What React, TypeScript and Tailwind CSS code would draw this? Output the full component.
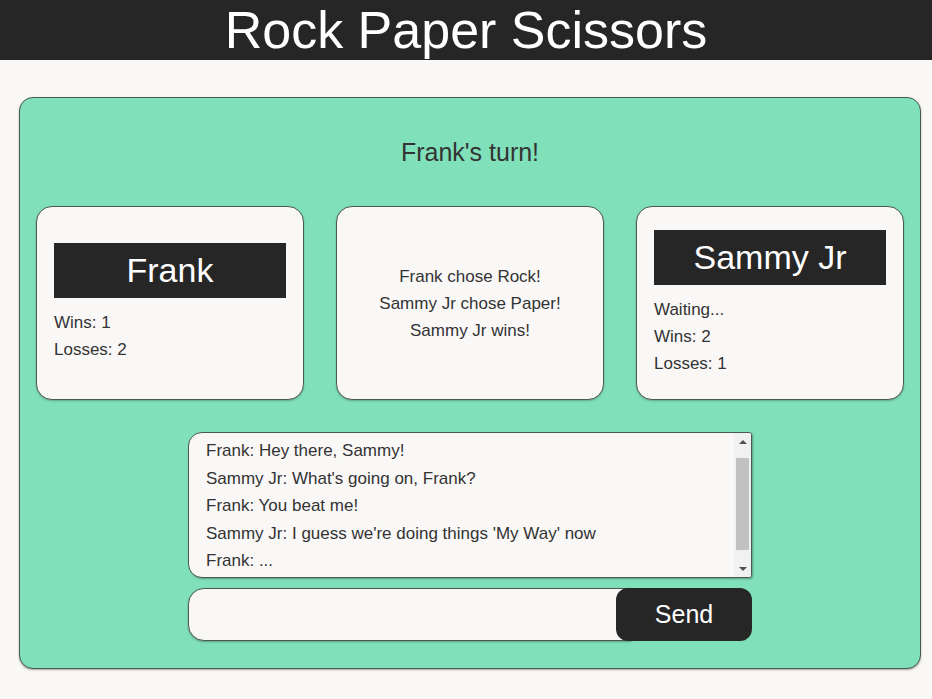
export default function App() {
  const font = { fontFamily: '"Liberation Sans", Arial, sans-serif' };
  const messages = [
    "Frank: Hey there, Sammy!",
    "Sammy Jr: What's going on, Frank?",
    "Frank: You beat me!",
    "Sammy Jr: I guess we're doing things 'My Way' now",
    "Frank: ...",
  ];

  return (
    <div className="min-h-[699px] bg-[#faf8f7] pb-[30px] text-[#333]" style={font}>
      <header className="h-[60px] bg-[#262626] text-center text-[52px] leading-[60px] text-white">
        Rock Paper Scissors
      </header>

      <main className="ml-[19px] mt-[37px] w-[902px] rounded-[14px] border border-[#4a5a52] bg-[#80e0ba] px-4 pb-[27px] pt-[39px] shadow-[0_1px_2px_rgba(0,0,0,0.35)]">
        <h2 className="text-center text-[25px] leading-[30px]">Frank's turn!</h2>

        <div className="mt-[39px] flex gap-8">
          <div className="flex h-[194px] w-[268px] flex-col justify-center rounded-[16px] border border-[#4a5a52] bg-[#faf8f7] px-[17px] text-[17px] leading-[27px] shadow-[0_1px_2px_rgba(0,0,0,0.25)]">
            <div className="mb-[11px] h-[55px] bg-[#262626] text-center text-[34px] leading-[55px] text-white">
              Frank
            </div>
            <div>Wins: 1</div>
            <div>Losses: 2</div>
          </div>

          <div className="flex h-[194px] w-[268px] flex-col justify-center rounded-[16px] border border-[#4a5a52] bg-[#faf8f7] text-center text-[17px] leading-[27px] shadow-[0_1px_2px_rgba(0,0,0,0.25)]">
            <div>Frank chose Rock!</div>
            <div>Sammy Jr chose Paper!</div>
            <div>Sammy Jr wins!</div>
          </div>

          <div className="flex h-[194px] w-[268px] flex-col justify-center rounded-[16px] border border-[#4a5a52] bg-[#faf8f7] px-[17px] text-[17px] leading-[27px] shadow-[0_1px_2px_rgba(0,0,0,0.25)]">
            <div className="mb-[11px] h-[55px] bg-[#262626] text-center text-[34px] leading-[55px] text-white">
              Sammy Jr
            </div>
            <div>Waiting...</div>
            <div>Wins: 2</div>
            <div>Losses: 1</div>
          </div>
        </div>

        <div className="mx-auto mt-8 w-[564px]">
          <div className="flex h-[146px] overflow-hidden rounded-l-[14px] rounded-r-[3px] border border-[#4a5a52] bg-[#faf8f7] shadow-[1px_1px_2px_rgba(0,0,0,0.3)]">
            <div className="flex-1 overflow-hidden pl-[17px] pt-1 text-[17px] leading-[27.5px]">
              {messages.map((m) => (
                <div key={m} className="whitespace-nowrap">
                  {m}
                </div>
              ))}
            </div>
            <div className="flex w-[17px] flex-col bg-[#f1f1f1]">
              <div className="flex h-[17px] items-center justify-center">
                <div className="h-0 w-0 border-x-[4px] border-b-[4px] border-x-transparent border-b-[#505050]" />
              </div>
              <div className="mx-[2px] mt-[8px] h-[92px] bg-[#c1c1c1]" />
              <div className="flex-1" />
              <div className="flex h-[17px] items-center justify-center">
                <div className="h-0 w-0 border-x-[4px] border-t-[4px] border-x-transparent border-t-[#505050]" />
              </div>
            </div>
          </div>

          <div className="mt-[10px] flex h-[53px]">
            <input
              className="-mr-4 h-full flex-1 rounded-l-[16px] border border-[#4a5a52] bg-[#faf8f7] px-4 text-[17px] outline-none shadow-[0_1px_2px_rgba(0,0,0,0.3)]"
              aria-label="message"
            />
            <button className="relative h-full w-[136px] rounded-[12px] bg-[#262626] text-[25px] text-white">
              Send
            </button>
          </div>
        </div>
      </main>
    </div>
  );
}
